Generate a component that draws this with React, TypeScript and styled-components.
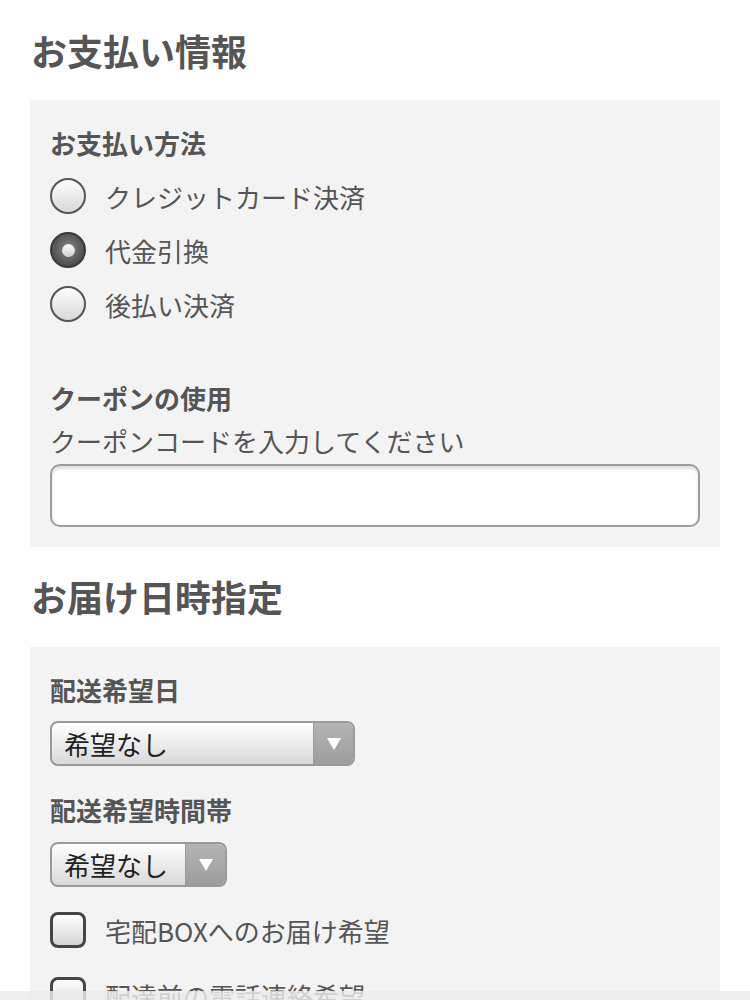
import React, { useState } from "react";
import styled, { createGlobalStyle } from "styled-components";

const GlobalStyle = createGlobalStyle`
  html, body { margin: 0; padding: 0; background: #fff; }
  body {
    font-family: "Noto Sans CJK JP", "Noto Sans", sans-serif;
    color: #555;
  }
  * { box-sizing: border-box; }
`;

const Page = styled.div`
  padding: 28px 30px 0 30px;
  width: 750px;
`;

const Heading = styled.h2<{ $mt?: number }>`
  margin: ${(p) => p.$mt ?? 0}px 0 0 0;
  font-size: 36px;
  line-height: 44px;
  font-weight: 700;
  color: #555;
  padding-left: 1px;
`;

const Panel = styled.section<{ $mt: number }>`
  margin-top: ${(p) => p.$mt}px;
  background: #f3f3f3;
  padding: 25px 20px 20px 20px;
  display: flex;
  flex-direction: column;
`;

const Label = styled.div<{ $mt?: number }>`
  font-size: 26px;
  line-height: 36px;
  font-weight: 700;
  color: #555;
  margin-top: ${(p) => p.$mt ?? 0}px;
`;

const Hint = styled.div`
  font-size: 26px;
  line-height: 36px;
  color: #555;
  margin-top: 7px;
`;

const OptionList = styled.div<{ $mt: number; $gap?: number }>`
  display: flex;
  flex-direction: column;
  margin-top: ${(p) => p.$mt}px;
  gap: ${(p) => p.$gap ?? 0}px;
`;

const OptionRow = styled.label`
  display: flex;
  align-items: center;
  height: 54px;
  gap: 19px;
  font-size: 26px;
  color: #555;
  cursor: pointer;
`;

const RadioDot = styled.span<{ $checked: boolean }>`
  flex: none;
  width: 36px;
  height: 36px;
  border-radius: 50%;
  border: 2px solid ${(p) => (p.$checked ? "#3a3a3a" : "#555")};
  background: ${(p) =>
    p.$checked
      ? "radial-gradient(circle at 50% 45%, #888 0%, #5a5a5a 55%, #3a3a3a 100%)"
      : "linear-gradient(#fdfdfd, #d8d8d8)"};
  display: flex;
  align-items: center;
  justify-content: center;
  &::after {
    content: "";
    display: ${(p) => (p.$checked ? "block" : "none")};
    width: 13px;
    height: 13px;
    border-radius: 50%;
    background: linear-gradient(#ffffff, #cfcfcf);
  }
`;

const CheckBox = styled.span`
  flex: none;
  width: 36px;
  height: 36px;
  border-radius: 8px;
  border: 3px solid #454545;
  background: linear-gradient(#fdfdfd, #d6d6d6);
`;

const TextInput = styled.input`
  margin-top: 5px;
  width: 100%;
  height: 63px;
  border: 2px solid #9c9c9c;
  border-radius: 10px;
  background: #fff;
  box-shadow: inset 0 3px 3px rgba(0, 0, 0, 0.12);
  font-size: 26px;
  padding: 0 14px;
  outline: none;
`;

const Select = styled.div<{ $width: number; $mt: number }>`
  margin-top: ${(p) => p.$mt}px;
  width: ${(p) => p.$width}px;
  height: 45px;
  border: 2px solid #9a9a9a;
  border-radius: 8px;
  overflow: hidden;
  display: flex;
  background: linear-gradient(#ffffff, #d9d9d9);
`;

const SelectText = styled.div`
  flex: 1;
  padding-left: 12px;
  font-size: 26px;
  line-height: 41px;
  color: #222;
`;

const SelectArrow = styled.div`
  flex: none;
  width: 40px;
  background: linear-gradient(#b4b4b4, #9d9d9d);
  display: flex;
  align-items: center;
  justify-content: center;
  border-left: 1px solid #9a9a9a;
`;

const BottomBar = styled.div`
  position: fixed;
  left: 0;
  right: 0;
  bottom: 0;
  height: 9px;
  background: rgba(236, 236, 236, 0.82);
`;

const Arrow = () => (
  <svg width="14" height="12" viewBox="0 0 14 12">
    <polygon points="0,0 14,0 7,12" fill="#fff" />
  </svg>
);

export default function App() {
  const [pay, setPay] = useState(1);
  const methods = ["クレジットカード決済", "代金引換", "後払い決済"];
  return (
    <>
      <GlobalStyle />
      <Page>
        <Heading>お支払い情報</Heading>
        <Panel $mt={28}>
          <Label>お支払い方法</Label>
          <OptionList $mt={8}>
            {methods.map((m, i) => (
              <OptionRow key={m} onClick={() => setPay(i)}>
                <RadioDot $checked={pay === i} />
                {m}
              </OptionRow>
            ))}
          </OptionList>
          <Label $mt={49}>クーポンの使用</Label>
          <Hint>クーポンコードを入力してください</Hint>
          <TextInput type="text" />
        </Panel>
        <Heading $mt={27}>お届け日時指定</Heading>
        <Panel $mt={29}>
          <Label>配送希望日</Label>
          <Select $width={305} $mt={13}>
            <SelectText>希望なし</SelectText>
            <SelectArrow>
              <Arrow />
            </SelectArrow>
          </Select>
          <Label $mt={26}>配送希望時間帯</Label>
          <Select $width={177} $mt={14}>
            <SelectText>希望なし</SelectText>
            <SelectArrow>
              <Arrow />
            </SelectArrow>
          </Select>
          <OptionList $mt={16} $gap={11}>
            <OptionRow>
              <CheckBox />
              宅配BOXへのお届け希望
            </OptionRow>
            <OptionRow>
              <CheckBox />
              配達前の電話連絡希望
            </OptionRow>
          </OptionList>
        </Panel>
      </Page>
      <BottomBar />
    </>
  );
}
